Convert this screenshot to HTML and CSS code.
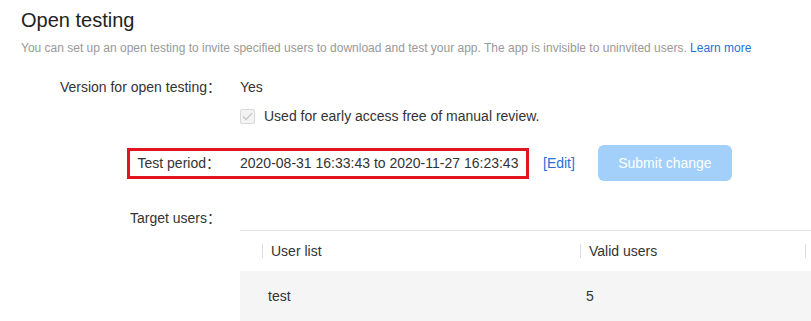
FILE: index.html
```html
<!DOCTYPE html>
<html lang="en">
<head>
    <meta charset="UTF-8">
    <meta name="viewport" content="width=device-width, initial-scale=1.0">
    <title>Open testing</title>
    <link rel="stylesheet" href="styles.css">
</head>
<body>
    <div class="page">
        <div class="page-header">
            <h1>Open testing</h1>
            <p>You can set up an open testing to invite specified users to download and test your app. The app is invisible to uninvited users. <a href="#">Learn more</a></p>
        </div>

        <div class="form">
            <div class="form-row row-version">
                <div class="form-label">Version for open testing：</div>
                <div class="form-value">Yes</div>
            </div>

            <div class="form-row row-check">
                <div class="form-label"></div>
                <div class="form-value">
                    <label class="check">
                        <span class="check-box">
                            <svg width="11" height="9" viewBox="0 0 11 9"><path d="M1 4.5 L4 7.5 L10 1.2" fill="none" stroke="#c8c8c8" stroke-width="1.4"/></svg>
                        </span>
                        Used for early access free of manual review.
                    </label>
                </div>
            </div>

            <div class="form-row row-period">
                <div class="period-box">
                    <div class="form-label">Test period：</div>
                    <div class="form-value">2020-08-31 16:33:43 to 2020-11-27 16:23:43</div>
                </div>
                <a href="#" class="edit-link">[Edit]</a>
                <button class="submit-btn" disabled>Submit change</button>
            </div>

            <div class="form-row row-target">
                <div class="form-label">Target users：</div>
            </div>

            <div class="users-table">
                <div class="th"></div>
                <div class="th"><span class="sep"></span>User list</div>
                <div class="th"><span class="sep"></span>Valid users</div>
                <div class="th"><span class="sep"></span></div>
                <div class="td"></div>
                <div class="td">test</div>
                <div class="td">5</div>
                <div class="td"></div>
            </div>
        </div>
    </div>
</body>
</html>
```

FILE: styles.css
```css
* {
    margin: 0;
    padding: 0;
    box-sizing: border-box;
}

body {
    font-family: Arial, "Liberation Sans", "Noto Sans CJK SC", sans-serif;
    color: #333;
    background: white;
    font-size: 14px;
    overflow: hidden;
}

.page {
    width: 811px;
}

.page-header {
    padding: 7px 0 0 21px;
}

.page-header h1 {
    font-size: 20px;
    font-weight: normal;
    color: #222;
    line-height: 26px;
}

.page-header p {
    margin-top: 7px;
    font-size: 12px;
    color: #999;
    line-height: 16px;
}

.page-header a,
.edit-link {
    color: #2a6fd8;
    text-decoration: none;
}

.form {
    margin-top: 21px;
}

.form-row {
    display: flex;
    align-items: center;
    line-height: 20px;
}

.form-label {
    width: 223px;
    text-align: right;
    padding-right: 2px;
}

.form-value {
    margin-left: 17px;
}

.row-check {
    margin-top: 9px;
}

.check {
    display: flex;
    align-items: center;
    color: #333;
}

.check-box {
    width: 15px;
    height: 15px;
    border: 1px solid #d9d9d9;
    border-radius: 2px;
    background: #f3f3f3;
    display: flex;
    align-items: center;
    justify-content: center;
    margin-right: 9px;
}

.row-period {
    margin-top: 19px;
    height: 36px;
}

.period-box {
    display: flex;
    align-items: center;
    height: 31px;
    margin-left: 127px;
    width: 402px;
    border: 3px solid #e2141f;
}

.period-box .form-label {
    width: 92px;
}

.period-box .form-value {
    margin-left: 18px;
}

.edit-link {
    margin-left: 14px;
}

.submit-btn {
    margin-left: 23px;
    width: 134px;
    height: 36px;
    border: none;
    border-radius: 6px;
    background: #a3d0fb;
    color: white;
    font-family: inherit;
    font-size: 14px;
}

.row-target {
    margin-top: 27px;
}

.users-table {
    margin: 2px 0 0 240px;
    display: grid;
    grid-template-columns: 22px 318px 225px 1fr;
    border-top: 1px solid #e3e3e3;
}

.th {
    height: 40px;
    display: flex;
    align-items: center;
}

.sep {
    width: 1px;
    height: 14px;
    background: #ddd;
    margin-right: 8px;
}

.td {
    height: 50px;
    background: #f5f5f5;
    display: flex;
    align-items: center;
    padding-left: 6px;
}

.td:first-child {
    padding-left: 0;
}
```
